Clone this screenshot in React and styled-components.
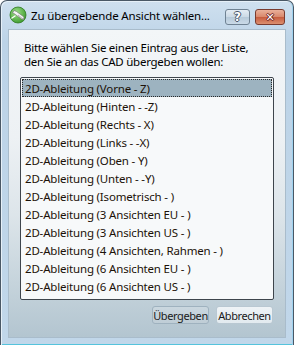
import React, { useState } from "react";
import styled, { createGlobalStyle } from "styled-components";

const GlobalStyle = createGlobalStyle`
  html, body {
    margin: 0;
    padding: 0;
    background: #ffffff;
  }
  * {
    box-sizing: border-box;
  }
`;

const views = [
  "2D-Ableitung (Vorne - Z)",
  "2D-Ableitung (Hinten - -Z)",
  "2D-Ableitung (Rechts - X)",
  "2D-Ableitung (Links - -X)",
  "2D-Ableitung (Oben - Y)",
  "2D-Ableitung (Unten - -Y)",
  "2D-Ableitung (Isometrisch - )",
  "2D-Ableitung (3 Ansichten EU - )",
  "2D-Ableitung (3 Ansichten US - )",
  "2D-Ableitung (4 Ansichten, Rahmen - )",
  "2D-Ableitung (6 Ansichten EU - )",
  "2D-Ableitung (6 Ansichten US - )",
];

// kleines Programmsymbol: gruener Kreis mit Werkzeug
const AppIcon = () => (
  <svg width="18" height="18" viewBox="0 0 18 18">
    <defs>
      <radialGradient id="g" cx="40%" cy="35%" r="70%">
        <stop offset="0%" stopColor="#9ee08a" />
        <stop offset="100%" stopColor="#3c9a2c" />
      </radialGradient>
    </defs>
    <circle cx="9" cy="9" r="8" fill="url(#g)" stroke="#2e7a22" strokeWidth="0.8" />
    <path d="M5 4.5 L7.5 5.5 L15 11 L14.5 13.5 L12.5 13 L5 7.5 L3.5 7 Z" fill="#f6f6f6" stroke="#6b6b6b" strokeWidth="0.6" />
    <path d="M9 9 L14.5 13.5" stroke="#9a9a9a" strokeWidth="0.8" />
    <path d="M3 12 L6 10" stroke="#ffffff" strokeWidth="1.4" strokeLinecap="round" />
  </svg>
);

const App = () => {
  const [selected, setSelected] = useState(0);

  return (
    <>
      <GlobalStyle />
      <Window>
        <TitleBar>
          <AppIcon />
          <Title>Zu übergebende Ansicht wählen...</Title>
          <CaptionButtons>
            <HelpButton>?</HelpButton>
            <CloseButton>✕</CloseButton>
          </CaptionButtons>
        </TitleBar>

        <Client>
          <Prompt>
            Bitte wählen Sie einen Eintrag aus der Liste,
            <br />
            den Sie an das CAD übergeben wollen:
          </Prompt>

          <ListBox>
            {views.map((label, i) => (
              <ListItem
                key={label}
                $selected={i === selected}
                onClick={() => setSelected(i)}
              >
                {label}
              </ListItem>
            ))}
          </ListBox>

          <ButtonRow>
            <DialogButton $primary>Übergeben</DialogButton>
            <DialogButton>Abbrechen</DialogButton>
          </ButtonRow>
        </Client>
      </Window>
    </>
  );
};

export default App;

const Window = styled.div`
  width: 294px;
  height: 345px;
  display: flex;
  flex-direction: column;
  border: 1px solid #4a5866;
  border-bottom: none;
  border-radius: 7px 7px 0 0;
  background: linear-gradient(180deg, #cfe0ef 0%, #bcd3e7 12%, #c1d7ea 100%);
  box-shadow: inset 1px 1px 0 #e6f0f8, inset -1px 0 0 #9fd2ee,
    inset 0 -1px 0 #55c3dc;
  font-family: "Noto Sans", "DejaVu Sans", sans-serif;
  color: #000;
  overflow: hidden;
`;

const TitleBar = styled.div`
  height: 27px;
  display: flex;
  align-items: center;
  padding: 0 0 0 8px;
  gap: 4px;
`;

const Title = styled.div`
  font-size: 11.5px;
  letter-spacing: -0.16px;
  white-space: nowrap;
  margin-top: 2px;
`;

const CaptionButtons = styled.div`
  margin-left: auto;
  align-self: flex-start;
  margin-top: 8px;
  margin-right: 8px;
  display: flex;
  gap: 5px;
`;

const CaptionButton = styled.div`
  height: 16px;
  display: flex;
  align-items: center;
  justify-content: center;
  border-radius: 3px;
  font-family: "DejaVu Sans", sans-serif;
  font-weight: bold;
  color: #fff;
  line-height: 1;
`;

const HelpButton = styled(CaptionButton)`
  width: 25px;
  border: 1px solid #6f8293;
  background: linear-gradient(180deg, #e3ecf4 0%, #cbd9e5 50%, #b6c9d9 51%, #cadae8 100%);
  font-size: 12px;
  text-shadow: 1px 0 0 #46566a, -1px 0 0 #46566a, 0 1px 0 #46566a,
    0 -1px 0 #46566a;
`;

const CloseButton = styled(CaptionButton)`
  width: 30px;
  border: 1px solid #7a3b2e;
  background: linear-gradient(180deg, #eab09a 0%, #d8876b 50%, #c65b3d 51%, #dc9070 100%);
  font-size: 11px;
  text-shadow: 1px 0 0 #6a1e1e, -1px 0 0 #6a1e1e, 0 1px 0 #6a1e1e,
    0 -1px 0 #6a1e1e;
`;

const Client = styled.div`
  flex: 1;
  margin: 1px 7px 7px 7px;
  display: flex;
  flex-direction: column;
  padding: 11px 11px 0 11px;
  border: 1px solid #a9bccb;
  background: linear-gradient(
    180deg,
    #f3f6f8 0%,
    #edf1f4 35%,
    #dde5ea 60%,
    #c6d4dc 82%,
    #b3c5d0 100%
  );
`;

const Prompt = styled.div`
  font-size: 11.5px;
  line-height: 14px;
  padding-left: 4px;
  letter-spacing: -0.25px;
  white-space: nowrap;
`;

const ListBox = styled.div`
  margin-top: 8px;
  height: 223px;
  padding: 1px;
  border: 1px solid #3e454c;
  border-radius: 2px;
  background: #f7f9fa;
  display: flex;
  flex-direction: column;
`;

const ListItem = styled.div`
  height: 18px;
  flex: none;
  display: flex;
  align-items: center;
  padding-left: 3px;
  font-size: 11.5px;
  letter-spacing: -0.18px;
  color: #1c1208;
  white-space: nowrap;
  cursor: default;
  background: ${(p) => (p.$selected ? "#9db3c0" : "transparent")};
  outline: ${(p) => (p.$selected ? "1px dotted #2a2a2a" : "none")};
  outline-offset: -1px;
`;

const ButtonRow = styled.div`
  display: flex;
  justify-content: flex-end;
  gap: 7px;
  margin-top: 6px;
  padding-right: 1px;
`;

const DialogButton = styled.button`
  width: 57px;
  height: 18px;
  padding: 0;
  font-family: "Noto Sans", "DejaVu Sans", sans-serif;
  font-size: 11px;
  color: #1a1a1a;
  border-radius: 3px;
  border: 1px solid ${(p) => (p.$primary ? "#9fb2bf" : "#b9c8d2")};
  background: ${(p) =>
    p.$primary
      ? "linear-gradient(180deg, #cad7df 0%, #bfcdd6 100%)"
      : "linear-gradient(180deg, #eef3f6 0%, #e2eaef 100%)"};
  display: flex;
  align-items: center;
  justify-content: center;
  letter-spacing: -0.4px;
`;
